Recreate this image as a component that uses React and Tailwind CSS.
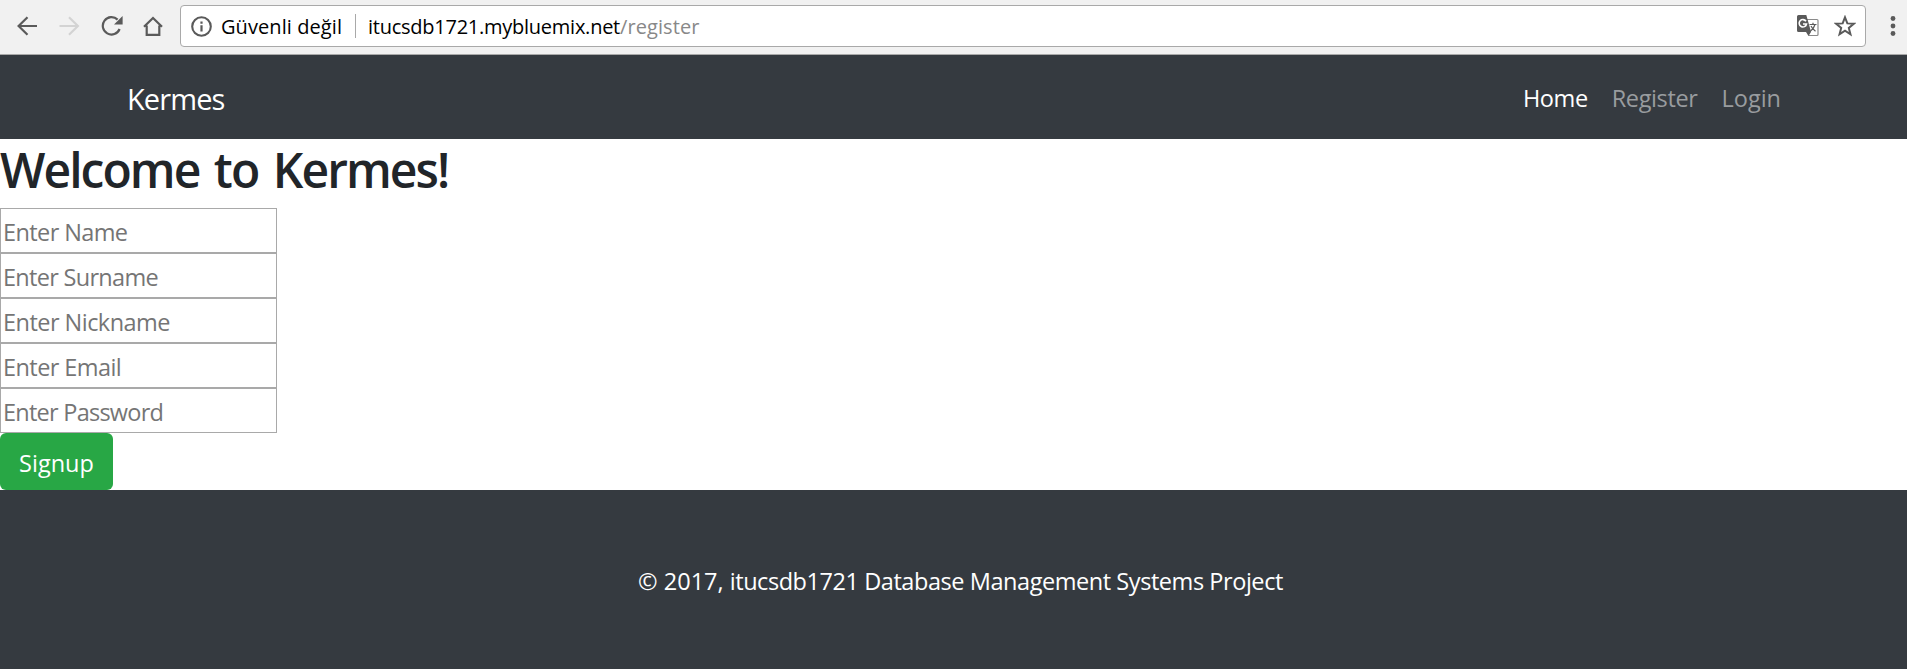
import React from "react";

const fields = [
  { type: "text", placeholder: "Enter Name", tracking: "tracking-[-0.6px]" },
  { type: "text", placeholder: "Enter Surname", tracking: "tracking-[-0.7px]" },
  { type: "text", placeholder: "Enter Nickname", tracking: "tracking-[-0.53px]" },
  { type: "text", placeholder: "Enter Email", tracking: "tracking-[-0.57px]" },
  { type: "password", placeholder: "Enter Password", tracking: "tracking-[-0.75px]" },
];

function BrowserBar() {
  return (
    <div className="flex h-[55px] shrink-0 items-start border-b border-[#a9a9a9] bg-[#f1f1f1] pt-[5px]">
      <div className="flex h-[42px] w-[180px] shrink-0 items-center pl-[17px] text-[#5a5a5a]">
        <svg width="21" height="20" viewBox="0 0 21 20" fill="none" stroke="currentColor" strokeWidth="2.2">
          <path d="M20 10H2M10.500 1.200L1.600 10l8.900 8.800" />
        </svg>
        <svg className="ml-[21px] text-[#d3d3d3]" width="21" height="20" viewBox="0 0 21 20" fill="none" stroke="currentColor" strokeWidth="2.2">
          <path d="M0.500 10H19M10 1.200l8.900 8.800-8.900 8.800" />
        </svg>
        <svg className="ml-[21px]" width="22" height="20" viewBox="0 0 22 20">
          <path d="M16.600 3.600A8.700 8.700 0 1 0 18.600 13" fill="none" stroke="currentColor" strokeWidth="2.200" />
          <path d="M21.600 0v8.600h-8.600z" fill="currentColor" />
        </svg>
        <svg className="ml-[20px]" width="20" height="20" viewBox="0 0 20 20" fill="none" stroke="currentColor" strokeWidth="2.200">
          <path d="M1 10.800L10 2l9 8.800M3.700 9.500v9.300h12.600V9.500" />
        </svg>
      </div>
      <div className="flex h-[42px] w-[1686px] shrink-0 items-center rounded-[4px] border border-[#a9a9a9] bg-white pl-[10px] text-[20px] text-black">
        <svg className="text-[#5a5a5a]" width="21" height="21" viewBox="0 0 21 21">
          <circle cx="10.500" cy="10.500" r="9.300" fill="none" stroke="currentColor" strokeWidth="2.100" />
          <path d="M9.400 9.200h2.200v6.300H9.400zM9.400 5.500h2.200v2.200H9.400z" fill="currentColor" />
        </svg>
        <span className="ml-[9px] w-[134px] whitespace-nowrap pt-[2px] tracking-[0.08px]">Güvenli değil</span>
        <span className="h-[24px] w-px bg-[#a9a9a9]" />
        <span className="ml-[12px] whitespace-nowrap pt-[2px]">
          <span className="tracking-[-0.25px]">itucsdb1721.mybluemix.net</span>
          <span className="tracking-[0.08px] text-[#888]">/register</span>
        </span>
        <span className="ml-auto mr-[9px] flex items-center gap-[15px] text-[#5a5a5a]">
          <svg width="22" height="22" viewBox="0 0 22 22">
            <path d="M10 4.500h10a1 1 0 0 1 1 1v14a1 1 0 0 1-1 1h-8.500" fill="#fff" stroke="#8a8a8a" strokeWidth="1.200" />
            <path d="M1.500 0h7.800l4.800 17H1.500A1.500 1.500 0 0 1 0 15.500v-14A1.500 1.500 0 0 1 1.500 0zM9 17h5l-2.500 4z" fill="currentColor" />
            <path d="M9 6.300A3.700 3.700 0 1 0 9.500 9H6" fill="none" stroke="#fff" strokeWidth="1.600" />
            <path d="M12.500 9.500h7M16 7.800v1.700M18 9.500c-.8 3-2.500 5-4.500 6.500M14 11c1 2.200 2.700 4 4.500 5.300" fill="none" stroke="currentColor" strokeWidth="1.200" />
          </svg>
          <svg width="22" height="22" viewBox="0 0 22 22" fill="none" stroke="currentColor" strokeWidth="2">
            <path d="M11 2.300l2.350 6.100 6.500.35-5.050 4.150 1.650 6.400L11 15.700l-5.450 3.600 1.650-6.400-5.050-4.150 6.500-.35z" />
          </svg>
        </span>
      </div>
      <svg className="ml-[24px] mt-[11px] shrink-0 text-[#5a5a5a]" width="6" height="20" viewBox="0 0 6 20" fill="currentColor">
        <circle cx="3" cy="2.500" r="2.400" />
        <circle cx="3" cy="10" r="2.400" />
        <circle cx="3" cy="17.500" r="2.400" />
      </svg>
    </div>
  );
}

export default function App() {
  return (
    <div className="flex h-[669px] w-[1907px] flex-col overflow-hidden bg-white font-['Open_Sans',sans-serif] text-[23.5px] text-[#212529]">
      <BrowserBar />
      <nav className="flex h-[84px] shrink-0 items-center justify-between bg-[#353a40] pl-[127px] pr-[126px] pt-[3px] text-white">
        <a className="text-[29px] tracking-[-0.9px]">Kermes</a>
        <div className="flex gap-[24px] pt-px">
          <a className="tracking-[-0.4px]">Home</a>
          <a className="tracking-[-0.38px] text-[#999c9f]">Register</a>
          <a className="text-[#999c9f]">Login</a>
        </div>
      </nav>
      <main className="flex h-[351px] shrink-0 flex-col items-start">
        <h1 className="h-[69px] whitespace-nowrap text-[48px] font-semibold leading-[62px] tracking-[-1.95px] [word-spacing:4px]">Welcome to Kermes!</h1>
        {fields.map((f) => (
          <input
            key={f.placeholder}
            type={f.type}
            placeholder={f.placeholder}
            className={`h-[45px] w-[277px] border border-[#a9a9a9] px-[2px] pt-[2px] placeholder:text-[#757575] ${f.tracking}`}
          />
        ))}
        <button className="h-[57px] w-[113px] rounded-[6px] bg-[#28a745] pt-[4px] text-white">Signup</button>
      </main>
      <footer className="flex grow justify-center bg-[#353a40] pl-[14px] pt-[74px] text-white">
        <p className="whitespace-nowrap">
          © 2017, <span className="tracking-[-0.44px]">itucsdb1721 Database Management Systems Project</span>
        </p>
      </footer>
    </div>
  );
}
